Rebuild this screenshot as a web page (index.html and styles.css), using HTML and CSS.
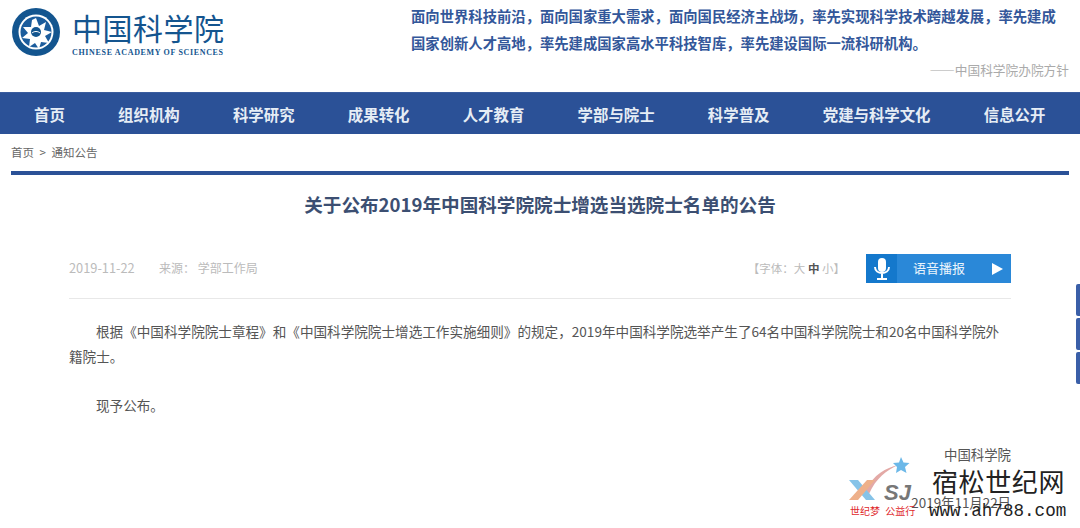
FILE: index.html
```html
<!DOCTYPE html>
<html lang="zh-CN">
<head>
  <meta charset="UTF-8" />
  <title>关于公布2019年中国科学院院士增选当选院士名单的公告</title>
  <link rel="stylesheet" href="styles.css">
</head>
<body>

  <!-- Header -->
  <header class="top">
    <div class="logo">
      <svg class="emblem" width="48" height="48" viewBox="0 0 48 48">
        <circle cx="24" cy="24" r="24" fill="#13558f" />
        <circle cx="24" cy="24" r="17.5" fill="#fff" />
        <circle cx="24" cy="24" r="15.5" fill="#1b5c9c" />
        <path fill="#fff" d="M24 10l3 8 7-4-2 8 8 2-7 4 4 7-8-1-2 7-4-6-6 4 1-8-8-1 6-5-5-6 8 0 1-7z" />
        <circle cx="24" cy="24" r="5" fill="#13558f" />
        <path d="M20 25c2-2 6-2 8 0" stroke="#fff" fill="none" />
      </svg>
      <div class="logo-text">
        <div class="logo-cn">中国科学院</div>
        <div class="logo-en">CHINESE ACADEMY OF SCIENCES</div>
      </div>
    </div>
    <div class="motto">
      <p>面向世界科技前沿，面向国家重大需求，面向国民经济主战场，率先实现科学技术跨越发展，率先建成<br>国家创新人才高地，率先建成国家高水平科技智库，率先建设国际一流科研机构。</p>
      <div class="motto-src">——中国科学院办院方针</div>
    </div>
  </header>

  <!-- Nav -->
  <nav class="nav">
    <a>首页</a>
    <a>组织机构</a>
    <a>科学研究</a>
    <a>成果转化</a>
    <a>人才教育</a>
    <a>学部与院士</a>
    <a>科学普及</a>
    <a>党建与科学文化</a>
    <a>信息公开</a>
  </nav>

  <div class="crumb">首页 &gt; 通知公告</div>

  <!-- Article -->
  <main class="article">
    <h1>关于公布2019年中国科学院院士增选当选院士名单的公告</h1>
    <div class="meta">
      <span class="date">2019-11-22</span>
      <span class="source">来源： 学部工作局</span>
      <span class="fontsize">【字体：大 <b>中</b> 小】</span>
      <div class="voice">
        <span class="voice-icon">
          <svg width="16" height="22" viewBox="0 0 16 22">
            <rect x="4" y="0" width="8" height="14" rx="4" fill="#fff" />
            <path d="M1 9c0 8 14 8 14 0M8 16v4M3 21h10" stroke="#fff" stroke-width="2" fill="none" />
          </svg>
        </span>
        <span class="voice-label">语音播报</span>
        <svg class="voice-play" width="11" height="12" viewBox="0 0 11 12">
          <path d="M0 0l11 6-11 6z" fill="#fff" />
        </svg>
      </div>
    </div>
    <div class="content">
      <p>根据《中国科学院院士章程》和《中国科学院院士增选工作实施细则》的规定，2019年中国科学院选举产生了64名中国科学院院士和20名中国科学院外籍院士。</p>
      <p>现予公布。</p>
      <p class="sign">中国科学院</p>
      <p class="sign sign-date">2019年11月22日</p>
    </div>
  </main>

  <!-- Side tabs -->
  <div class="side">
    <span></span>
    <span></span>
    <span></span>
  </div>

  <!-- Watermark -->
  <div class="mark">
    <svg class="mark-logo" width="72" height="62" viewBox="0 0 72 62">
      <path d="M17 35C26 18 38 12 50 9 38 15 28 22 21 38z" fill="#e3a9a6" />
      <path d="M53 1l2.500 5.500 6 .5-4.500 4 1.500 6-5.500-3-5 3 1-6-4-4 6-.5z" fill="#6cb8e8" />
      <path d="M1 24h9l17 20h-9z" fill="#86c3e8" />
      <path d="M27 24h-8L1 44h9z" fill="#eeb08a" />
      <text class="mark-sj" x="36" y="44">SJ</text>
    </svg>
    <div class="mark-slogan">世纪梦 公益行</div>
    <div class="mark-name">宿松世纪网</div>
    <div class="mark-url">www.ah788.com</div>
  </div>

</body>
</html>
```

FILE: styles.css
```css
/* Basic Reset */
* {
  box-sizing: border-box;
}

html, body {
  height: 528px;
  overflow: hidden;
}

body {
  position: relative;
  margin: 0;
  background: #fff;
  color: #555;
  font-family: "Noto Sans CJK SC", "Liberation Sans", sans-serif;
}

p {
  margin: 0;
}

/* Header */
.top {
  height: 92px;
  display: flex;
  justify-content: space-between;
  padding: 0 11px 0 12px;
}

.logo {
  display: flex;
  gap: 12px;
  padding-top: 8px;
}

.logo-cn {
  width: 151px;
  font-size: 30px;
  line-height: 38px;
  letter-spacing: 0.5px;
  color: #14558f;
  white-space: nowrap;
}

.logo-en {
  margin-top: 2px;
  font-family: "Liberation Serif", serif;
  font-size: 8px;
  font-weight: bold;
  line-height: 10px;
  letter-spacing: 0.66px;
  color: #14558f;
  white-space: nowrap;
}

.motto {
  width: 658px;
  padding-top: 2px;
}

.motto p {
  font-size: 14.33px;
  font-weight: bold;
  line-height: 27px;
  color: #33579a;
  white-space: nowrap;
}

.motto-src {
  margin-top: 4px;
  font-size: 12.7px;
  line-height: 20px;
  text-align: right;
  color: #aaa;
}

/* Nav */
.nav {
  height: 42px;
  display: flex;
  align-items: center;
  gap: 53.3px;
  padding-left: 34px;
  background: #2b5197;
  border-top: 1px solid #3a5d9f;
}

.nav a {
  font-size: 15.4px;
  font-weight: bold;
  color: #e6edf5;
  white-space: nowrap;
}

.crumb {
  height: 37px;
  padding: 10px 0 0 11px;
  font-size: 11.5px;
  line-height: 16px;
  word-spacing: 3px;
  color: #666;
}

/* Article */
.article {
  margin: 0 11px;
  padding: 0 58px;
  border-top: 4px solid #2b5197;
}

h1 {
  margin: 0;
  padding-top: 16px;
  font-size: 18.6px;
  line-height: 26px;
  font-weight: bold;
  text-align: center;
  color: #3c4f72;
}

.meta {
  margin-top: 37px;
  height: 45px;
  display: flex;
  align-items: flex-start;
  border-bottom: 1px solid #e8e8e8;
  font-size: 12px;
  line-height: 28px;
  color: #bbb;
}

.date {
  width: 90px;
  font-size: 12.8px;
}

.source {
  flex: 1;
}

.fontsize {
  margin-right: 21px;
  font-size: 11.5px;
}

.fontsize b {
  color: #555;
}

.voice {
  width: 145px;
  height: 29px;
  display: flex;
  align-items: center;
  background: #2a88d8;
  color: #eaf4fc;
}

.voice-icon {
  width: 31px;
  height: 29px;
  display: flex;
  align-items: center;
  justify-content: center;
  background: #1478cc;
}

.voice-label {
  width: 95px;
  padding: 0 0 2px 16px;
  font-size: 13px;
}

.content {
  padding-top: 20px;
  font-size: 13.6px;
  line-height: 25px;
  text-indent: 27px;
}

.content p {
  margin-bottom: 24px;
}

.content .sign {
  margin-bottom: 0;
  text-align: right;
  font-size: 13.4px;
}

.content .sign-date {
  margin-top: 23px;
}

/* Side tabs */
.side {
  position: absolute;
  top: 284px;
  right: 0;
  display: flex;
  flex-direction: column;
  gap: 2px;
}

.side span {
  width: 4px;
  height: 32px;
  background: #3a5fa8;
  border-radius: 2px 0 0 2px;
}

/* Watermark */
.mark {
  position: absolute;
  left: 848px;
  top: 456px;
  width: 220px;
  height: 72px;
}

.mark-logo {
  position: absolute;
  left: 0;
  top: 0;
}

.mark-sj {
  font-family: "Liberation Sans", sans-serif;
  font-size: 22px;
  font-weight: bold;
  font-style: italic;
  fill: #777;
}

.mark-slogan {
  position: absolute;
  left: 2px;
  top: 49px;
  font-size: 10px;
  line-height: 12px;
  word-spacing: 3px;
  color: #e0282c;
  white-space: nowrap;
}

.mark-name {
  position: absolute;
  left: 84px;
  top: 9px;
  font-size: 26px;
  line-height: 32px;
  letter-spacing: 0.6px;
  color: #222;
  white-space: nowrap;
}

.mark-url {
  position: absolute;
  left: 81px;
  top: 44px;
  font-family: "Liberation Mono", monospace;
  font-size: 17.6px;
  line-height: 22px;
  color: #222;
  white-space: nowrap;
}
```
